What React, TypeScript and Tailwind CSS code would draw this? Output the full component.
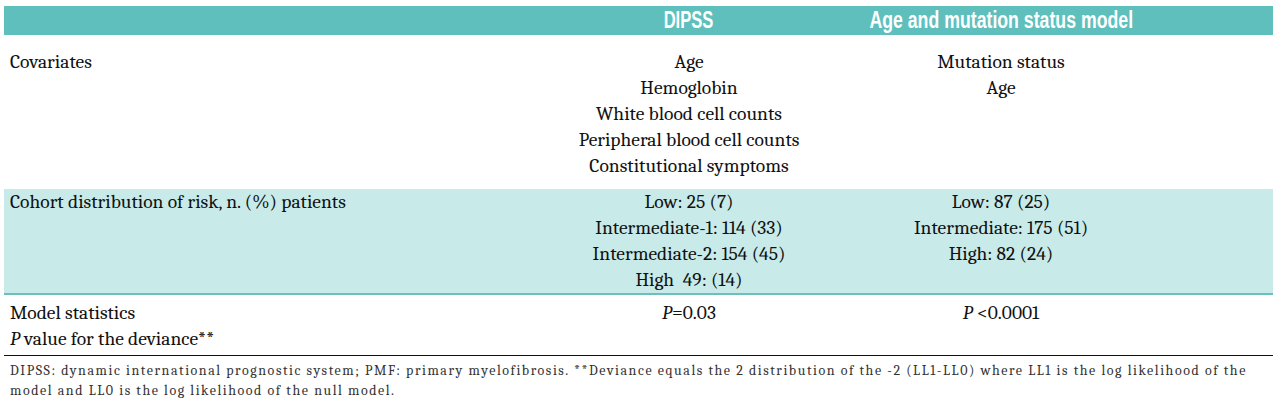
import React from 'react';

const cols = 'grid grid-cols-[529px_312px_312px_1fr]';

const dipssCovariates = [
  'Age',
  'Hemoglobin',
  'White blood cell counts',
  'Peripheral blood cell counts',
  'Constitutional symptoms',
];

const dipssRisk = ['Low: 25 (7)', 'Intermediate-1: 114 (33)', 'Intermediate-2: 154 (45)', 'High  49: (14)'];
const mutationRisk = ['Low: 87 (25)', 'Intermediate: 175 (51)', 'High: 82 (24)'];

const Lines: React.FC<{ items: string[] }> = ({ items }) => (
  <div className="text-center">
    {items.map((t, i) => (
      <div key={i} className="whitespace-pre">{t}</div>
    ))}
  </div>
);

const App: React.FC = () => {
  return (
    <div className="w-[1280px] h-[411px] bg-white pt-[6px] pl-[4px] pr-[7px] overflow-hidden">
      {/* Header band */}
      <div className={`${cols} h-[29px] bg-[#5ebfbd] items-center text-white font-bold text-[23px] leading-[29px] whitespace-nowrap font-['Liberation_Sans']`}>
        <div />
        <div className="flex justify-center">
          <span className="inline-block scale-x-[0.72]">DIPSS</span>
        </div>
        <div className="flex justify-center">
          <span className="inline-block scale-x-[0.77]">Age and mutation status model</span>
        </div>
        <div />
      </div>

      <div className="font-serif text-[19.5px] leading-[26px] text-[#111]">
        {/* Covariates */}
        <div className={`${cols} pt-[14px] pb-[10px]`}>
          <div className="pl-[6px]">Covariates</div>
          <Lines items={dipssCovariates} />
          <Lines items={['Mutation status', 'Age']} />
          <div />
        </div>

        {/* Cohort distribution */}
        <div className={`${cols} bg-[#c8ebea] border-b-2 border-[#6cbfbc]`}>
          <div className="pl-[6px]">Cohort distribution of risk, n. (%) patients</div>
          <Lines items={dipssRisk} />
          <Lines items={mutationRisk} />
          <div />
        </div>

        {/* Model statistics */}
        <div className={`${cols} pt-[5px] pb-[3px] border-b-[1.5px] border-[#111]`}>
          <div className="pl-[6px]">
            <div>Model statistics</div>
            <div><i>P</i> value for the deviance**</div>
          </div>
          <div className="text-center"><i>P</i>=0.03</div>
          <div className="text-center"><i>P</i> &lt;0.0001</div>
          <div />
        </div>
      </div>

      {/* Footnote */}
      <div className="pt-[5px] pl-[6px] font-serif text-[14px] tracking-[1.55px] leading-[20px] text-[#333] whitespace-nowrap">
        <div>DIPSS: dynamic international prognostic system; PMF: primary myelofibrosis. **Deviance equals the 2 distribution of the -2 (LL1-LL0) where LL1 is the log likelihood of the</div>
        <div>model and LL0 is the log likelihood of the null model.</div>
      </div>
    </div>
  );
};

export default App;
